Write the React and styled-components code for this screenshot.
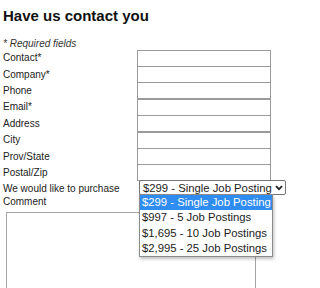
import React from "react";
import styled, { createGlobalStyle } from "styled-components";

const GlobalStyle = createGlobalStyle`
  html, body {
    margin: 0;
    padding: 0;
    background: #fff;
  }
  body {
    font-family: "Liberation Sans", Arial, sans-serif;
    color: #222;
  }
`;

const Wrapper = styled.section`
  width: 288px;
  height: 288px;
  overflow: hidden;
  padding: 7px 0 0 3px;
  box-sizing: border-box;
`;

const Title = styled.h1`
  margin: 0;
  font-size: 15px;
  line-height: 18px;
  font-weight: bold;
  color: #111;
`;

const Note = styled.p`
  margin: 13px 0 0;
  font-size: 10px;
  line-height: 12px;
  font-style: italic;
  color: #333;
`;

const FormGrid = styled.div`
  display: grid;
  grid-template-columns: 134px 134px;
  grid-template-rows: repeat(8, 16.4px) 15px 12px;
  align-items: center;
  margin-top: 0;
`;

const Label = styled.label`
  font-size: 10px;
  line-height: 12px;
  color: #222;
  white-space: nowrap;
`;

const TextInput = styled.input`
  box-sizing: border-box;
  width: 134px;
  height: 17px;
  margin: 0;
  border: 1px solid #9a9a9a;
  padding: 0 2px;
  font-size: 10px;
  background: #fff;
`;

const SelectCell = styled.div`
  position: relative;
  align-self: start;
  margin: -1px 0 0 2px;
`;

const SelectBox = styled.div`
  box-sizing: border-box;
  width: 147px;
  height: 15px;
  border: 1px solid #767676;
  border-radius: 2px;
  display: flex;
  align-items: center;
  justify-content: space-between;
  padding: 0 2px 0 3px;
  font-size: 11.3px;
  color: #222;
  background: #fff;
`;

const OptionList = styled.ul`
  position: absolute;
  top: 14px;
  left: 0;
  width: 132px;
  margin: 0;
  padding: 0;
  list-style: none;
  border: 1px solid #8c8c8c;
  background: #fff;
  box-shadow: 1px 2px 3px rgba(0, 0, 0, 0.25);
  z-index: 5;
`;

const Option = styled.li`
  height: 15.25px;
  line-height: 15.25px;
  padding: 0 2px;
  font-size: 11.3px;
  white-space: nowrap;
  color: ${(p) => (p.$active ? "#fff" : "#222")};
  background: ${(p) => (p.$active ? "#2f8cf0" : "#fff")};
`;

const Comment = styled.textarea`
  display: block;
  box-sizing: border-box;
  width: 250px;
  height: 120px;
  margin: 4px 0 0 3px;
  border: 1px solid #a5a5a5;
  resize: none;
`;

const fields = [
  "Contact*",
  "Company*",
  "Phone",
  "Email*",
  "Address",
  "City",
  "Prov/State",
  "Postal/Zip",
];

const options = [
  "$299 - Single Job Posting",
  "$997 - 5 Job Postings",
  "$1,695 - 10 Job Postings",
  "$2,995 - 25 Job Postings",
];

const Chevron = () => (
  <svg width="8" height="6" viewBox="0 0 8 6">
    <path d="M1 1.2 L4 4.2 L7 1.2" fill="none" stroke="#222" strokeWidth="1.8" />
  </svg>
);

const App = () => {
  return (
    <Wrapper>
      <GlobalStyle />
      <Title>Have us contact you</Title>
      <Note>* Required fields</Note>
      <FormGrid>
        {fields.map((f) => (
          <React.Fragment key={f}>
            <Label>{f}</Label>
            <TextInput type="text" />
          </React.Fragment>
        ))}
        <Label>We would like to purchase</Label>
        <SelectCell>
          <SelectBox>
            <span>{options[0]}</span>
            <Chevron />
          </SelectBox>
          <OptionList>
            {options.map((o, i) => (
              <Option key={o} $active={i === 0}>
                {o}
              </Option>
            ))}
          </OptionList>
        </SelectCell>
        <Label>Comment</Label>
      </FormGrid>
      <Comment />
    </Wrapper>
  );
};

export default App;
